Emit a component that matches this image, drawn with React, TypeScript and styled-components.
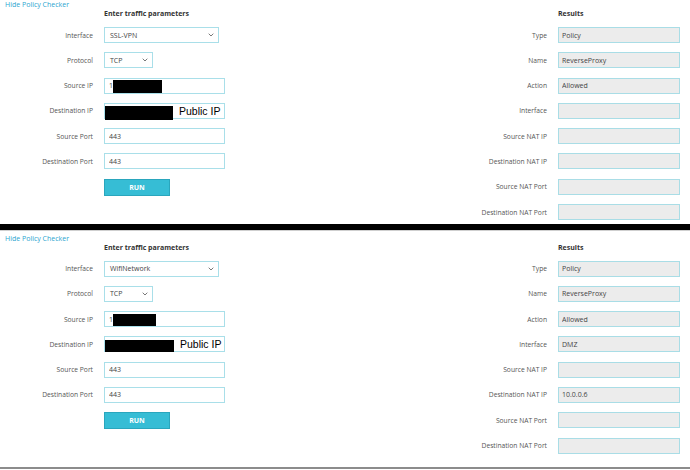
import React from "react";
import styled, { createGlobalStyle } from "styled-components";

const GlobalStyle = createGlobalStyle`
  html, body { margin: 0; padding: 0; background: #fff; }
  body { font-family: "Open Sans", "Liberation Sans", sans-serif; }
  #root { width: 690px; height: 470px; overflow: hidden; }
`;

type Redact = { x: number; y: number; w: number; h: number; note?: string };

type Checker = {
  iface: string;
  srcIp: Redact;
  dstIp: Redact;
  results: string[];
};

const resultLabels = [
  "Type",
  "Name",
  "Action",
  "Interface",
  "Source NAT IP",
  "Destination NAT IP",
  "Source NAT Port",
  "Destination NAT Port",
];

const checkers: Checker[] = [
  {
    iface: "SSL-VPN",
    srcIp: { x: 9, y: 2, w: 49, h: 13 },
    dstIp: { x: 1, y: 3, w: 68, h: 14, note: "Public IP" },
    results: ["Policy", "ReverseProxy", "Allowed", "", "", "", "", ""],
  },
  {
    iface: "WifiNetwork",
    srcIp: { x: 9, y: 2.5, w: 43, h: 12 },
    dstIp: { x: 1, y: 3.5, w: 69, h: 12, note: "Public IP" },
    results: ["Policy", "ReverseProxy", "Allowed", "DMZ", "", "10.0.0.6", "", ""],
  },
];

const App = () => {
  return (
    <Page>
      <GlobalStyle />
      {checkers.map((c, i) => (
        <React.Fragment key={i}>
          {i > 0 && <Divider />}
          <PolicyChecker data={c} $second={i > 0} />
        </React.Fragment>
      ))}
    </Page>
  );
};

const Chevron = () => (
  <ChevronIcon width="6" height="4" viewBox="0 0 6 4">
    <polyline points="0.7,0.7 3,3 5.3,0.7" fill="none" stroke="#555" strokeWidth="0.8" />
  </ChevronIcon>
);

const RedactedInput = ({ value, r }: { value: string; r: Redact }) => (
  <FieldWrap $w={121}>
    <Field readOnly value={value} />
    <Blackout $x={r.x} $y={r.y} $w={r.w} $h={r.h} />
    {r.note && <Note $x={r.x + r.w + 6}>{r.note}</Note>}
  </FieldWrap>
);

const PolicyChecker = ({ data, $second }: { data: Checker; $second: boolean }) => {
  return (
    <Panel $second={$second}>
      <HideLink>Hide Policy Checker</HideLink>
      <Columns>
        <Section>
          <Heading $indent={104}>Enter traffic parameters</Heading>
          <FormGrid $label={93}>
            <Label>Interface</Label>
            <FieldWrap $w={115}>
              <SelectBox>{data.iface}</SelectBox>
              <Chevron />
            </FieldWrap>
            <Label>Protocol</Label>
            <FieldWrap $w={49}>
              <SelectBox>TCP</SelectBox>
              <Chevron />
            </FieldWrap>
            <Label>Source IP</Label>
            <RedactedInput value="1" r={data.srcIp} />
            <Label>Destination IP</Label>
            <RedactedInput value="" r={data.dstIp} />
            <Label>Source Port</Label>
            <FieldWrap $w={121}>
              <Field readOnly value="443" />
            </FieldWrap>
            <Label>Destination Port</Label>
            <FieldWrap $w={121}>
              <Field readOnly value="443" />
            </FieldWrap>
            <span />
            <RunButton>RUN</RunButton>
          </FormGrid>
        </Section>
        <Section>
          <Heading $indent={141}>Results</Heading>
          <FormGrid $label={130}>
            {resultLabels.map((l, i) => (
              <React.Fragment key={l}>
                <Label>{l}</Label>
                <FieldWrap $w={122}>
                  <ResultField readOnly value={data.results[i]} />
                </FieldWrap>
              </React.Fragment>
            ))}
          </FormGrid>
        </Section>
      </Columns>
    </Panel>
  );
};

export default App;

const Page = styled.div`
  width: 690px;
  height: 470px;
  display: flex;
  flex-direction: column;
  background: #fff;
`;

const Divider = styled.div`
  height: 6px;
  flex: none;
  background: #000;
`;

const Panel = styled.section<{ $second: boolean }>`
  box-sizing: border-box;
  flex: none;
  height: ${(p) => (p.$second ? 239 : 224)}px;
  padding-top: ${(p) => (p.$second ? 2.5 : 0)}px;
  border-top: ${(p) => (p.$second ? "1px solid #cfcfcf" : "none")};
  border-bottom: ${(p) => (p.$second ? "2px solid #8c8c8c" : "none")};
`;

const HideLink = styled.a`
  display: block;
  height: 9px;
  line-height: 9px;
  padding-left: 5px;
  font-size: 7px;
  color: #2ba6cf;
  cursor: pointer;
`;

const Columns = styled.div`
  display: flex;
  justify-content: space-between;
  padding-right: 10px;
`;

const Section = styled.div`
  display: flex;
  flex-direction: column;
`;

const Heading = styled.div<{ $indent: number }>`
  height: 10px;
  line-height: 10px;
  margin-left: ${(p) => p.$indent}px;
  font-size: 7px;
  font-weight: 700;
  color: #333;
`;

const FormGrid = styled.div<{ $label: number }>`
  display: grid;
  grid-template-columns: ${(p) => p.$label}px auto;
  column-gap: 11px;
  row-gap: 9.3px;
  margin-top: 8px;
  align-items: center;
`;

const Label = styled.div`
  text-align: right;
  font-size: 6.7px;
  color: #555;
  white-space: nowrap;
`;

const FieldWrap = styled.div<{ $w: number }>`
  position: relative;
  width: ${(p) => p.$w}px;
  height: 16px;
`;

const boxBase = `
  box-sizing: border-box;
  width: 100%;
  height: 16px;
  margin: 0;
  font-family: "Open Sans", "Liberation Sans", sans-serif;
  font-size: 7px;
  color: #444;
  outline: none;
`;

const Field = styled.input`
  ${boxBase}
  display: block;
  padding: 0 4px;
  border: 1px solid #a9dfe9;
  background: #fff;
`;

const ResultField = styled.input`
  ${boxBase}
  display: block;
  padding: 0 3px;
  border: 1px solid #a9dde6;
  background: #ececec;
`;

const SelectBox = styled.div`
  ${boxBase}
  display: flex;
  align-items: center;
  padding: 0 5px;
  border: 1px solid #a9dfe9;
  background: #fff;
`;

const ChevronIcon = styled.svg`
  position: absolute;
  right: 5px;
  top: 6px;
`;

const Blackout = styled.div<{ $x: number; $y: number; $w: number; $h: number }>`
  position: absolute;
  left: ${(p) => p.$x}px;
  top: ${(p) => p.$y}px;
  width: ${(p) => p.$w}px;
  height: ${(p) => p.$h}px;
  background: #000;
`;

const Note = styled.span<{ $x: number }>`
  position: absolute;
  left: ${(p) => p.$x}px;
  top: 1px;
  font-family: "Liberation Sans", Arial, sans-serif;
  font-size: 10.5px;
  line-height: 14px;
  color: #000;
`;

const RunButton = styled.button`
  box-sizing: border-box;
  width: 66px;
  height: 17px;
  padding: 0;
  border: 1px solid #2aa6bd;
  background: #36bdd5;
  color: #fff;
  font-family: "Open Sans", "Liberation Sans", sans-serif;
  font-size: 7px;
  font-weight: 700;
  cursor: pointer;
`;
